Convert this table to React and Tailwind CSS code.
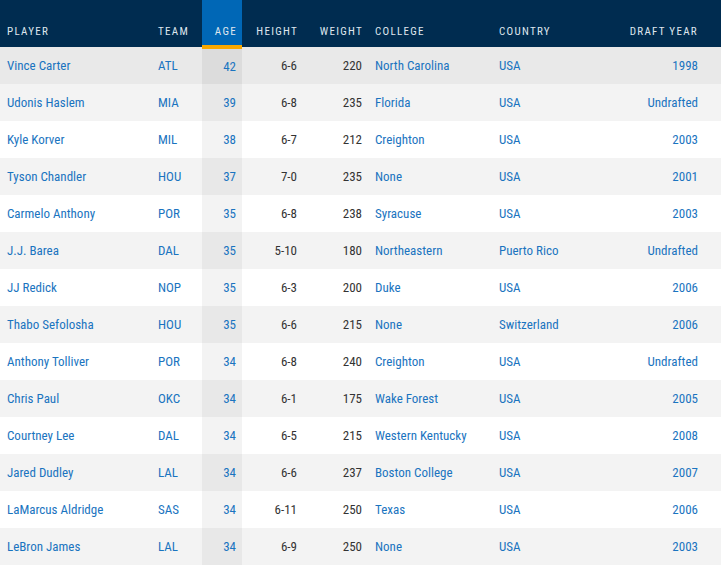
const players = [
  ['Vince Carter', 'ATL', 42, '6-6', 220, 'North Carolina', 'USA', '1998'],
  ['Udonis Haslem', 'MIA', 39, '6-8', 235, 'Florida', 'USA', 'Undrafted'],
  ['Kyle Korver', 'MIL', 38, '6-7', 212, 'Creighton', 'USA', '2003'],
  ['Tyson Chandler', 'HOU', 37, '7-0', 235, 'None', 'USA', '2001'],
  ['Carmelo Anthony', 'POR', 35, '6-8', 238, 'Syracuse', 'USA', '2003'],
  ['J.J. Barea', 'DAL', 35, '5-10', 180, 'Northeastern', 'Puerto Rico', 'Undrafted'],
  ['JJ Redick', 'NOP', 35, '6-3', 200, 'Duke', 'USA', '2006'],
  ['Thabo Sefolosha', 'HOU', 35, '6-6', 215, 'None', 'Switzerland', '2006'],
  ['Anthony Tolliver', 'POR', 34, '6-8', 240, 'Creighton', 'USA', 'Undrafted'],
  ['Chris Paul', 'OKC', 34, '6-1', 175, 'Wake Forest', 'USA', '2005'],
  ['Courtney Lee', 'DAL', 34, '6-5', 215, 'Western Kentucky', 'USA', '2008'],
  ['Jared Dudley', 'LAL', 34, '6-6', 237, 'Boston College', 'USA', '2007'],
  ['LaMarcus Aldridge', 'SAS', 34, '6-11', 250, 'Texas', 'USA', '2006'],
  ['LeBron James', 'LAL', 34, '6-9', 250, 'None', 'USA', '2003'],
];

export default function App() {
  return (
    <div
      className="w-[721px] h-[566px] overflow-hidden bg-white"
      style={{ fontFamily: '"Roboto Condensed", "Liberation Sans Narrow", Roboto, sans-serif' }}
    >
      <table className="w-[721px] table-fixed border-collapse text-[13px]">
        <colgroup>
          <col className="w-[152px]" />
          <col className="w-[50px]" />
          <col className="w-[40px]" />
          <col className="w-[61px]" />
          <col className="w-[66px]" />
          <col className="w-[124px]" />
          <col className="w-[118px]" />
          <col className="w-[110px]" />
        </colgroup>
        <thead>
          <tr className="bg-[#002c50] text-[11px] uppercase tracking-[1.3px] text-[#dfe6ee]">
            <th className="h-[47px] pl-[7px] pt-[17px] text-left font-normal">Player</th>
            <th className="pl-[6px] pt-[17px] text-left font-normal">Team</th>
            <th className="border-b-4 border-[#f9a800] bg-[#0067b6] pr-[5px] pt-[19px] text-right font-normal">Age</th>
            <th className="pr-[5px] pt-[17px] text-right font-normal">Height</th>
            <th className="pr-[6px] pt-[17px] text-right font-normal">Weight</th>
            <th className="pl-[6px] pt-[17px] text-left font-normal">College</th>
            <th className="pl-[6px] pt-[17px] text-left font-normal">Country</th>
            <th className="pr-[23px] pt-[17px] text-right font-normal">Draft Year</th>
          </tr>
        </thead>
        <tbody>
          {players.map((p, i) => {
            const rowBg = i === 0 ? 'bg-[#e9e9e9]' : i % 2 === 1 ? 'bg-[#f3f3f3]' : 'bg-white';
            const ageBg = i === 0 ? 'bg-[#dcdcdc]' : i % 2 === 1 ? 'bg-[#e8e8e8]' : 'bg-[#f3f3f3]';
            return (
              <tr key={p[0]} className={`h-[37px] ${rowBg}`}>
                <td className="pl-[7px] text-[#1a74c0]">{p[0]}</td>
                <td className="pl-[6px] text-[#1a74c0]">{p[1]}</td>
                <td className={`pr-[6px] text-right text-[#1a74c0] ${ageBg}`}>{p[2]}</td>
                <td className="pr-[6px] text-right text-[#333]">{p[3]}</td>
                <td className="pr-[7px] text-right text-[#333]">{p[4]}</td>
                <td className="pl-[6px] text-[#1a74c0]">{p[5]}</td>
                <td className="pl-[6px] text-[#1a74c0]">{p[6]}</td>
                <td className="pr-[23px] text-right text-[#1a74c0]">{p[7]}</td>
              </tr>
            );
          })}
        </tbody>
      </table>
    </div>
  );
}
